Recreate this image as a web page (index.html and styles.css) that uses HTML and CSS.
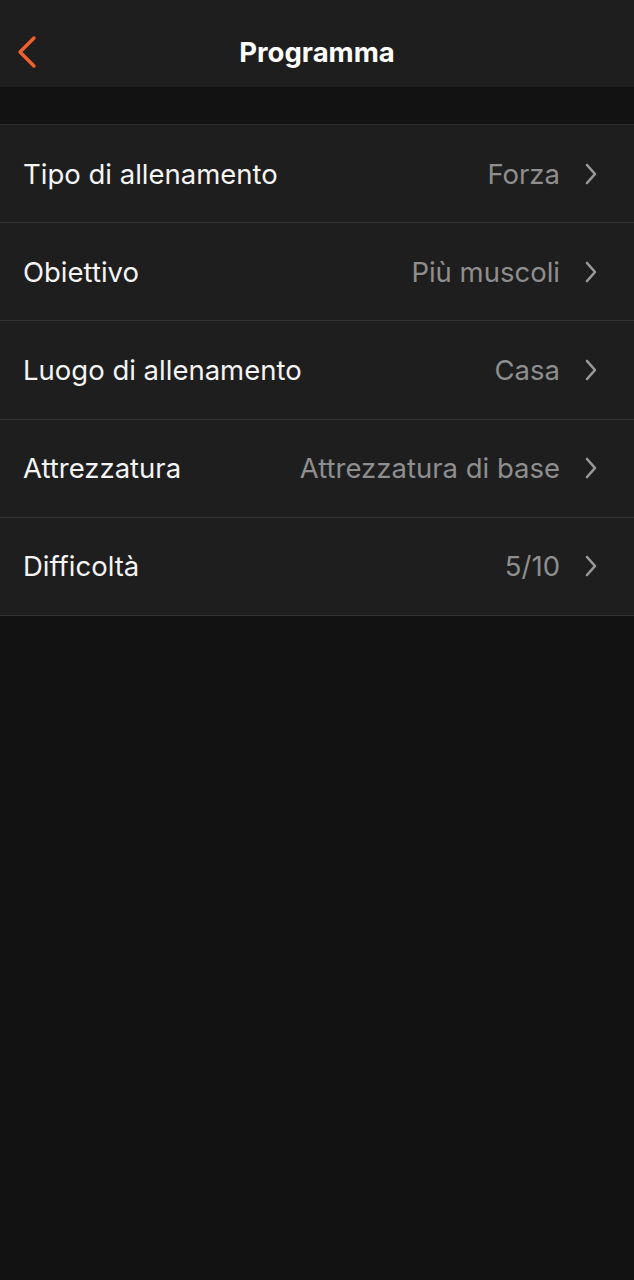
FILE: index.html
```html
<!DOCTYPE html>
<html lang="it">
<head>
    <meta charset="UTF-8">
    <meta name="viewport" content="width=device-width, initial-scale=1.0">
    <title>Programma</title>
    <link rel="stylesheet" href="styles.css">
</head>
<body>
    <header class="top-bar">
        <button class="back" aria-label="Indietro">
            <svg width="22" height="34" viewBox="0 0 22 34">
                <path d="M19 3 L5 17 L19 31" fill="none" stroke="#f0612d" stroke-width="3.4" stroke-linecap="round" stroke-linejoin="round"/>
            </svg>
        </button>
        <h1 class="title">Programma</h1>
    </header>

    <div class="spacer"></div>

    <ul class="settings">
        <li class="row">
            <span class="label">Tipo di allenamento</span>
            <span class="value">Forza</span>
            <svg class="chevron" width="14" height="22" viewBox="0 0 14 22"><path d="M3 2 L11 11 L3 20" fill="none" stroke="#9a9a9a" stroke-width="2.6" stroke-linecap="round" stroke-linejoin="round"/></svg>
        </li>
        <li class="row">
            <span class="label">Obiettivo</span>
            <span class="value">Più muscoli</span>
            <svg class="chevron" width="14" height="22" viewBox="0 0 14 22"><path d="M3 2 L11 11 L3 20" fill="none" stroke="#9a9a9a" stroke-width="2.6" stroke-linecap="round" stroke-linejoin="round"/></svg>
        </li>
        <li class="row">
            <span class="label">Luogo di allenamento</span>
            <span class="value">Casa</span>
            <svg class="chevron" width="14" height="22" viewBox="0 0 14 22"><path d="M3 2 L11 11 L3 20" fill="none" stroke="#9a9a9a" stroke-width="2.6" stroke-linecap="round" stroke-linejoin="round"/></svg>
        </li>
        <li class="row">
            <span class="label">Attrezzatura</span>
            <span class="value">Attrezzatura di base</span>
            <svg class="chevron" width="14" height="22" viewBox="0 0 14 22"><path d="M3 2 L11 11 L3 20" fill="none" stroke="#9a9a9a" stroke-width="2.6" stroke-linecap="round" stroke-linejoin="round"/></svg>
        </li>
        <li class="row">
            <span class="label">Difficoltà</span>
            <span class="value">5/10</span>
            <svg class="chevron" width="14" height="22" viewBox="0 0 14 22"><path d="M3 2 L11 11 L3 20" fill="none" stroke="#9a9a9a" stroke-width="2.6" stroke-linecap="round" stroke-linejoin="round"/></svg>
        </li>
    </ul>
</body>
</html>
```

FILE: styles.css
```css
body {
    margin: 0;
    background-color: #121212;
    color: #fff;
    font-family: Inter, "Noto Sans", sans-serif;
}
.top-bar {
    position: relative;
    height: 87px;
    background-color: #1e1e1e;
    display: flex;
    align-items: center;
    justify-content: center;
}
.back {
    position: absolute;
    left: 15px;
    top: 35px;
    padding: 0;
    border: none;
    background: none;
    line-height: 0;
}
.title {
    margin: 0;
    font-size: 27.5px;
    font-weight: 700;
    padding-top: 16px;
}
.spacer {
    height: 37px;
}
.settings {
    list-style: none;
    margin: 0;
    padding: 0;
    background-color: #1e1e1e;
    border-top: 1px solid #2c2c2c;
}
.row {
    display: flex;
    align-items: center;
    height: 97.2px;
    padding: 0 36px 0 23px;
    border-bottom: 1px solid #333;
    font-size: 27.5px;
}
.label {
    flex: 1;
    color: #f4f4f4;
}
.value {
    color: #8e8e8e;
    margin-right: 24px;
}
.chevron {
    display: block;
}
```
